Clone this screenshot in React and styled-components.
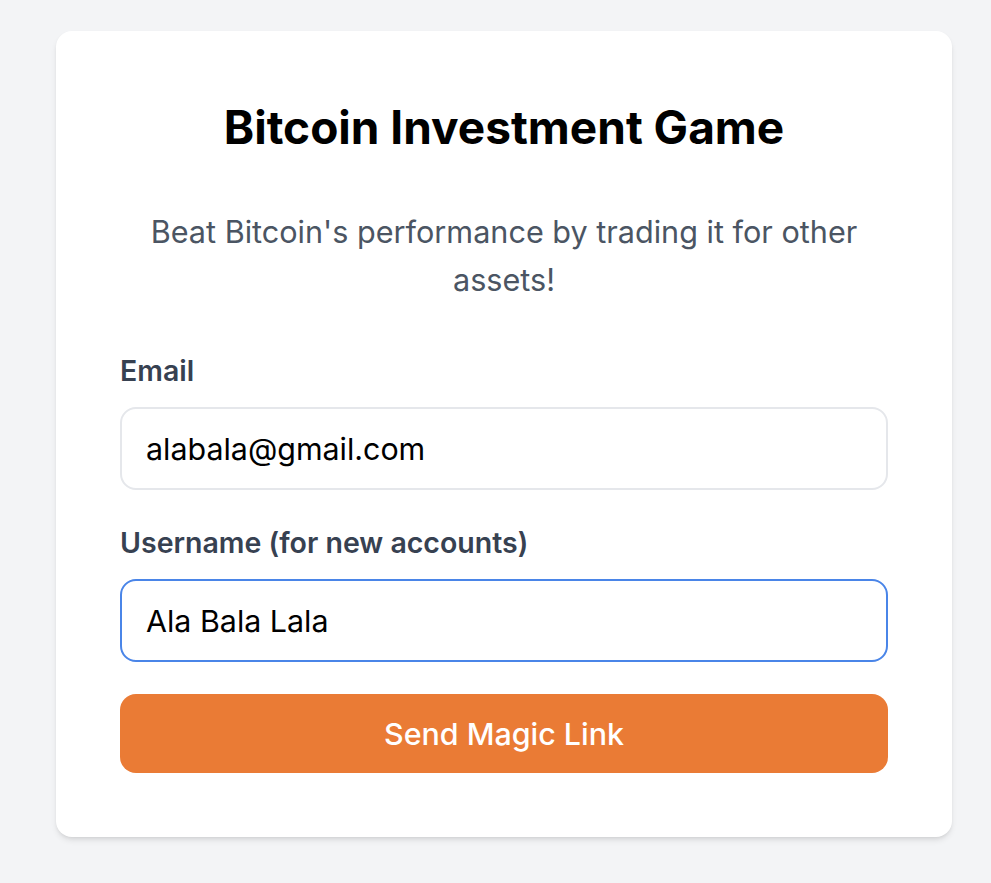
import React from "react";
import styled, { createGlobalStyle } from "styled-components";

const Global = createGlobalStyle`
  html, body { margin: 0; padding: 0; background: #f3f4f6; }
  body { font-family: Inter, "Noto Sans", "Liberation Sans", sans-serif; -webkit-font-smoothing: antialiased; }
  * { box-sizing: border-box; }
`;

const Page = styled.main`
  min-height: 883px;
  padding: 31px 39px 40px 56px;
  display: flex;
  align-items: flex-start;
`;

const Card = styled.section`
  width: 896px;
  background: #ffffff;
  border-radius: 16px;
  box-shadow: 0 4px 6px -1px rgba(0,0,0,0.1), 0 2px 4px -2px rgba(0,0,0,0.1);
  padding: 64px;
  display: flex;
  flex-direction: column;
`;

const Title = styled.h1`
  margin: 4px 0 0;
  font-size: 46px;
  line-height: 56px;
  font-weight: 700;
  color: #000;
  text-align: center;
`;

const Subtitle = styled.p`
  margin: 53px 0 0;
  font-size: 30.6px;
  line-height: 48px;
  color: #4b5563;
  text-align: center;
`;

const Form = styled.form`
  margin-top: 47px;
  display: flex;
  flex-direction: column;
`;

const Field = styled.div`
  display: flex;
  flex-direction: column;
  & + & { margin-top: 33px; }
`;

const Label = styled.label`
  font-size: 28.5px;
  line-height: 40px;
  font-weight: 600;
  color: #374151;
  margin-bottom: 16px;
`;

const Input = styled.input`
  height: 83px;
  width: 100%;
  border: 2px solid ${(p) => (p.$focused ? "#4a85e8" : "#e5e7eb")};
  border-radius: 16px;
  padding: 0 24px;
  font-family: inherit;
  font-size: 30.4px;
  color: #000;
  background: #fff;
  outline: none;
`;

const Button = styled.button`
  margin-top: 32px;
  height: 79px;
  width: 100%;
  border: none;
  border-radius: 16px;
  background: #ea7b35;
  color: #fff;
  font-family: inherit;
  font-size: 30.4px;
  font-weight: 500;
  cursor: pointer;
`;

export default function App() {
  return (
    <>
      <Global />
      <Page>
        <Card>
          <Title>Bitcoin Investment Game</Title>
          <Subtitle>Beat Bitcoin's performance by trading it for other assets!</Subtitle>
          <Form onSubmit={(e) => e.preventDefault()}>
            <Field>
              <Label htmlFor="email">Email</Label>
              <Input id="email" type="email" defaultValue="alabala@gmail.com" />
            </Field>
            <Field>
              <Label htmlFor="username">Username (for new accounts)</Label>
              <Input id="username" type="text" defaultValue="Ala Bala Lala" $focused />
            </Field>
            <Button type="submit">Send Magic Link</Button>
          </Form>
        </Card>
      </Page>
    </>
  );
}
